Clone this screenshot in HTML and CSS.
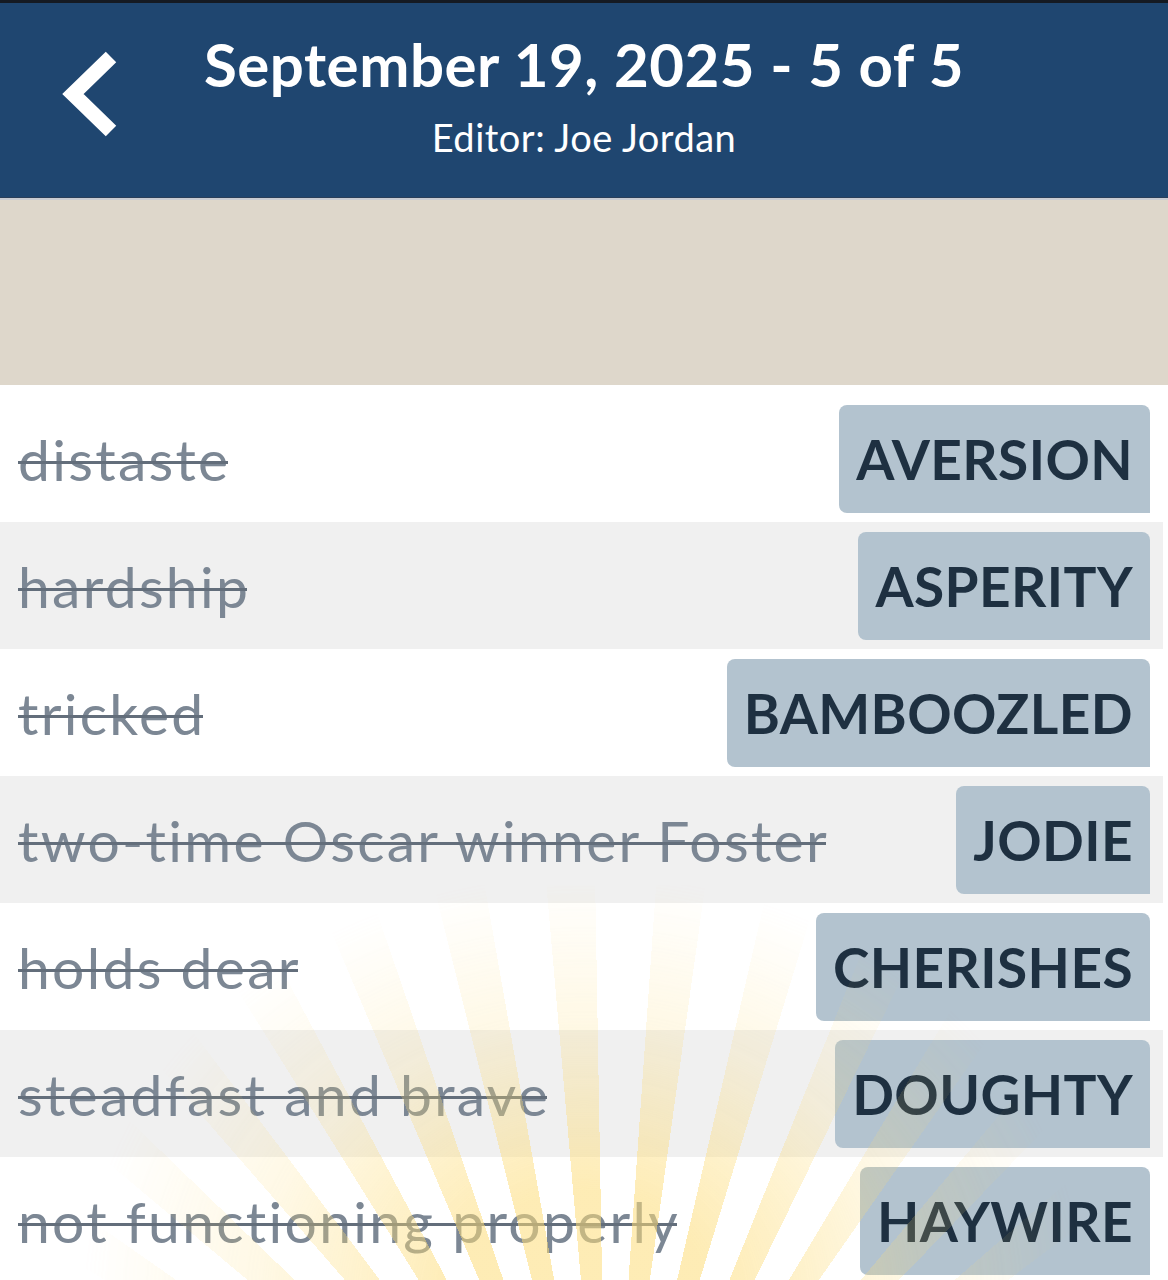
FILE: index.html
```html
<!DOCTYPE html>
<html>
<head>
<meta charset="utf-8">
<link rel="stylesheet" href="styles.css">
</head>
<body>
<div class="app">
  <header class="header">
    <div class="back">
      <svg width="70" height="100" viewBox="50 44 70 100">
        <polyline points="111,57 73,94 111,131" fill="none" stroke="#fff" stroke-width="15" stroke-linejoin="miter" stroke-linecap="butt"/>
      </svg>
    </div>
    <div class="titles">
      <div class="title">September 19, 2025 - 5 of 5</div>
      <div class="subtitle">Editor: Joe Jordan</div>
    </div>
  </header>
  <div class="band"></div>
  <div class="list">
    <div class="row"><span class="clue">distaste</span><span class="chip">AVERSION</span></div>
    <div class="row alt"><span class="clue">hardship</span><span class="chip">ASPERITY</span></div>
    <div class="row"><span class="clue">tricked</span><span class="chip">BAMBOOZLED</span></div>
    <div class="row alt"><span class="clue">two-time Oscar winner Foster</span><span class="chip">JODIE</span></div>
    <div class="row"><span class="clue">holds dear</span><span class="chip">CHERISHES</span></div>
    <div class="row alt"><span class="clue">steadfast and brave</span><span class="chip">DOUGHTY</span></div>
    <div class="row"><span class="clue">not functioning properly</span><span class="chip">HAYWIRE</span></div>
    <div class="rays"></div>
  </div>
</div>
</body>
</html>
```

FILE: styles.css
```css
html, body {
  margin: 0;
  padding: 0;
  background: #fff;
}
body {
  width: 1168px;
  height: 1280px;
  overflow: hidden;
  font-family: "Lato", "Noto Sans", sans-serif;
}
.app {
  display: flex;
  flex-direction: column;
}
.header {
  position: relative;
  height: 194px;
  background: #1f4670;
  border-top: 3px solid #151a22;
  border-bottom: 1px solid #2a3f5a;
  display: flex;
  justify-content: center;
}
.back {
  position: absolute;
  left: 50px;
  top: 41px;
  width: 70px;
  height: 100px;
}
.titles {
  display: flex;
  flex-direction: column;
  align-items: center;
  padding-top: 27px;
  color: #fff;
}
.title {
  font-weight: 700;
  font-size: 60px;
  line-height: 68px;
  letter-spacing: 0.5px;
}
.subtitle {
  font-size: 38px;
  line-height: 44px;
  margin-top: 17px;
  letter-spacing: 0.5px;
}
.band {
  height: 185px;
  background: #ded7cb;
  border-top: 2px solid #c9ccd2;
}
.list {
  position: relative;
  padding-top: 10px;
  display: flex;
  flex-direction: column;
}
.row {
  height: 127px;
  width: 1163px;
  box-sizing: border-box;
  padding: 0 13px 0 18px;
  display: flex;
  align-items: center;
  justify-content: space-between;
  background: #fff;
}
.row.alt {
  background: #f0f0f0;
}
.clue {
  position: relative;
  font-size: 57px;
  letter-spacing: 2.3px;
  color: #7c8794;
  white-space: nowrap;
}
.clue::after {
  content: "";
  position: absolute;
  left: 0;
  right: 3px;
  top: 53%;
  height: 3px;
  background: #636e7b;
}
.chip {
  height: 108px;
  box-sizing: border-box;
  padding: 0 17px 0 17px;
  display: flex;
  align-items: center;
  background: #b3c3cf;
  border-radius: 8px 8px 0 8px;
  color: #1e3041;
  font-weight: 700;
  font-size: 55px;
  letter-spacing: 0.4px;
  white-space: nowrap;
}
.rays {
  position: absolute;
  left: 0;
  top: 500px;
  width: 1168px;
  height: 410px;
  pointer-events: none;
  background: repeating-conic-gradient(from -86deg at 52% 170%, rgba(253, 220, 120, 0.55) 0deg 4deg, rgba(253, 220, 120, 0) 4deg 9deg);
  -webkit-mask-image: radial-gradient(ellipse 500px 420px at 50% 100%, #000 25%, rgba(0,0,0,0.35) 65%, transparent 100%);
  mask-image: radial-gradient(ellipse 500px 420px at 50% 100%, #000 25%, rgba(0,0,0,0.35) 65%, transparent 100%);
}
```
